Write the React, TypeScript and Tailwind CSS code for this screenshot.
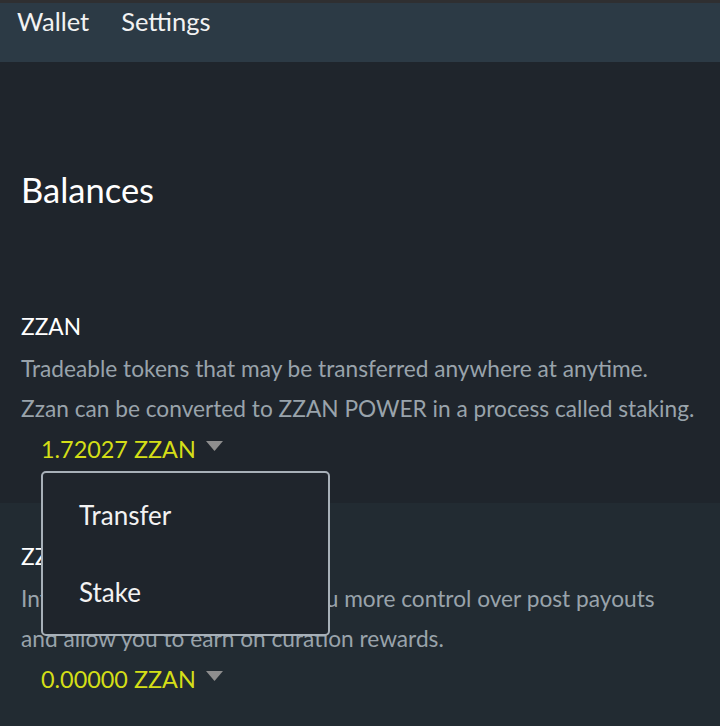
import React from 'react';

const Caret = () => (
  <svg width="17" height="11" viewBox="0 0 17 11" className="ml-[10px] mt-[-6px]">
    <polygon points="0,0 17,0 8.5,10" fill="#8e8e8e" />
  </svg>
);

function TokenBlock({ title, lines, amount }: { title: string; lines: string[]; amount: string }) {
  return (
    <div>
      <div className="text-[22.7px] leading-[30px] text-white">{title}</div>
      <div className="mt-[7px]">
        {lines.map((l) => (
          <div key={l} className="whitespace-nowrap text-[22.7px] leading-[40px] text-[#99a3ab]">
            {l}
          </div>
        ))}
      </div>
      <div className="flex items-center pl-[20px] text-[23.4px] leading-[40px] text-[#d4de17]">
        <span>{amount}</span>
        <Caret />
      </div>
    </div>
  );
}

export default function App() {
  return (
    <div className="relative min-h-[726px] bg-[#1f252c]" style={{ fontFamily: 'Lato, "Open Sans", sans-serif' }}>
      <header className="flex h-[62px] items-start gap-[32px] border-t-[3px] border-[#2f2f31] bg-[#2c3a45] pl-[17px] text-[25.5px] leading-[36px] text-[#f2f2f2]">
        <span>Wallet</span>
        <span>Settings</span>
      </header>

      <section className="px-[21px] pb-[34px] pt-[108px]">
        <h1 className="text-[34.5px] leading-[40px] text-white">Balances</h1>
        <div className="mt-[102px]">
          <TokenBlock
            title="ZZAN"
            lines={[
              'Tradeable tokens that may be transferred anywhere at anytime.',
              'Zzan can be converted to ZZAN POWER in a process called staking.',
            ]}
            amount="1.72027 ZZAN"
          />
        </div>
      </section>

      <section className="bg-[#222b32] px-[21px] pb-[30px] pt-[39px]">
        <TokenBlock
          title="ZZAN POWER"
          lines={[
            'Influence tokens which give you more control over post payouts',
            'and allow you to earn on curation rewards.',
          ]}
          amount="0.00000 ZZAN"
        />
      </section>

      <div className="absolute left-[41px] top-[471px] w-[289px] rounded-[5px] border-2 border-[#a7b0b8] bg-[#1f252c] py-[12px] text-[26px] text-[#f2f2f2]">
        <div className="pl-[36px] leading-[60px]">Transfer</div>
        <div className="mt-[17px] pl-[36px] leading-[60px]">Stake</div>
      </div>
    </div>
  );
}
